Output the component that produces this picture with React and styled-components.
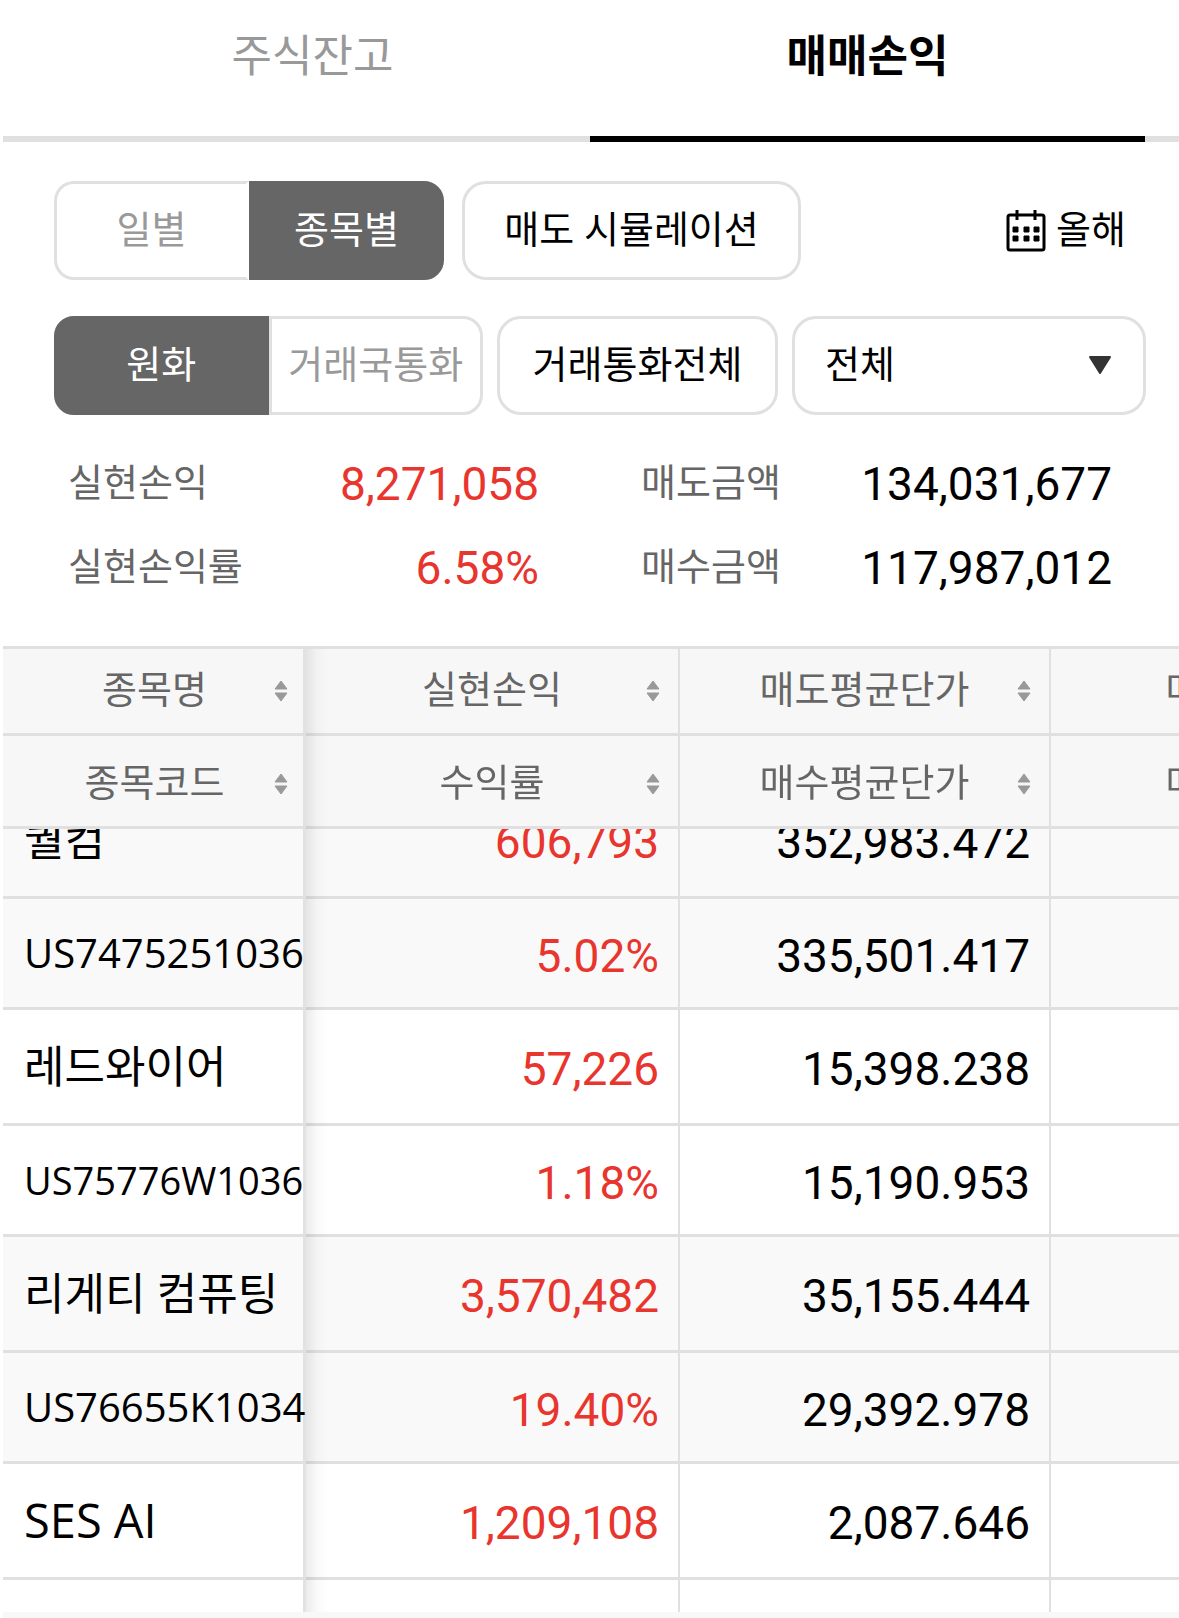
import React, { useLayoutEffect, useRef, useState } from 'react'
import styled, { createGlobalStyle } from 'styled-components'

const columns = [
    { top: "종목명", bottom: "종목코드" },
    { top: "실현손익", bottom: "수익률" },
    { top: "매도평균단가", bottom: "매수평균단가" },
    { top: "매도금액", bottom: "매수금액" },
];

const stocks = [
    { name: "퀄컴", code: "US7475251036", profit: "606,793", rate: "5.02%", sell: "352,983.472", buy: "335,501.417" },
    { name: "레드와이어", code: "US75776W1036", profit: "57,226", rate: "1.18%", sell: "15,398.238", buy: "15,190.953" },
    { name: "리게티 컴퓨팅", code: "US76655K1034", profit: "3,570,482", rate: "19.40%", sell: "35,155.444", buy: "29,392.978" },
    { name: "SES AI", latin: true, code: "", profit: "1,209,108", rate: "", sell: "2,087.646", buy: "" },
];

const CalendarIcon = () => (
    <svg width="40" height="42" viewBox="0 0 40 42" aria-hidden="true">
        <rect x="2" y="5" width="36" height="35" rx="2" fill="none" stroke="#000" strokeWidth="3" />
        <path d="M11 0v10M29 0v10" stroke="#000" strokeWidth="3" />
        <path d="M7 17h5v5h-5zM18 17h5v5h-5zM28 17h5v5h-5zM7 26h5v5h-5zM18 26h5v5h-5zM28 26h5v5h-5z" stroke="#000" strokeWidth="1" strokeLinejoin="round" />
    </svg>
);

const SortIcon = () => (
    <svg width="14" height="22" viewBox="0 0 14 22" aria-hidden="true">
        <path d="M7 1L13 9H1zM7 21L1 13H13z" fill="#999" stroke="#999" strokeLinejoin="round" />
    </svg>
);

const ArrowIcon = () => (
    <svg width="24" height="20" viewBox="0 0 24 20" aria-hidden="true">
        <path d="M2 1H22L12 17z" fill="#333" stroke="#333" strokeWidth="2" strokeLinejoin="round" />
    </svg>
);

const App = () => {

    const [tab, setTab] = useState("profit");
    const [group, setGroup] = useState("stock");
    const [currency, setCurrency] = useState("krw");
    const scroller = useRef(null);

    // the list opens a little way down, under the sticky header
    useLayoutEffect(() => {
        scroller.current.scrollTop = 46;
    }, []);

    return (
        <Screen>
            <GlobalStyle />
            <Tabs role="tablist">
                <Tab role="tab" aria-selected={tab === "balance"} $on={tab === "balance"} onClick={() => setTab("balance")}>주식잔고</Tab>
                <Tab role="tab" aria-selected={tab === "profit"} $on={tab === "profit"} onClick={() => setTab("profit")}>매매손익</Tab>
            </Tabs>

            <Filters>
                <FilterRow $gap="18px">
                    <Segment $w="390px">
                        <SegmentButton $on={group === "day"} onClick={() => setGroup("day")}>일별</SegmentButton>
                        <SegmentButton $on={group === "stock"} onClick={() => setGroup("stock")}>종목별</SegmentButton>
                    </Segment>
                    <Outline $w="339px">매도 시뮬레이션</Outline>
                    <Period><CalendarIcon /><PeriodText>올해</PeriodText></Period>
                </FilterRow>
                <FilterRow $gap="14px">
                    <Segment $w="429px">
                        <SegmentButton $on={currency === "krw"} onClick={() => setCurrency("krw")}>원화</SegmentButton>
                        <SegmentButton $on={currency === "local"} onClick={() => setCurrency("local")}>거래국통화</SegmentButton>
                    </Segment>
                    <Outline $w="281px">거래통화전체</Outline>
                    <SelectBox>
                        <Select aria-label="구분" defaultValue="all">
                            <option value="all">전체</option>
                        </Select>
                        <ArrowIcon />
                    </SelectBox>
                </FilterRow>
            </Filters>

            <Summary>
                <Pair><Label>실현손익</Label><Amount $red>8,271,058</Amount></Pair>
                <Pair><Label>매도금액</Label><Amount>134,031,677</Amount></Pair>
                <Pair><Label>실현손익률</Label><Amount $red>6.58%</Amount></Pair>
                <Pair><Label>매수금액</Label><Amount>117,987,012</Amount></Pair>
            </Summary>

            <Scroller ref={scroller}>
                <Table>
                    <colgroup>
                        <Col $w="303px" />
                        <Col $w="374px" />
                        <Col $w="371px" />
                        <Col $w="371px" />
                    </colgroup>
                    <Head>
                        {["top", "bottom"].map((line) => (
                            <tr key={line}>
                                {columns.map((col) => (
                                    <HeadCell key={col.top} scope="col">
                                        <SortButton $low={line === "bottom"}>
                                            <HeadText>{col[line]}</HeadText>
                                            <SortIcon />
                                        </SortButton>
                                    </HeadCell>
                                ))}
                            </tr>
                        ))}
                    </Head>
                    {stocks.map((stock) => (
                        <Group key={stock.name}>
                            <tr>
                                <Cell><Name $latin={stock.latin}>{stock.name}</Name></Cell>
                                <Cell><Value $red>{stock.profit}</Value></Cell>
                                <Cell><Value>{stock.sell}</Value></Cell>
                                <Cell />
                            </tr>
                            <tr>
                                <Cell><Code $wide={stock.code.includes("W")}>{stock.code}</Code></Cell>
                                <Cell><Value $red $low>{stock.rate}</Value></Cell>
                                <Cell><Value $low>{stock.buy}</Value></Cell>
                                <Cell />
                            </tr>
                        </Group>
                    ))}
                </Table>
            </Scroller>
            <Footer />
        </Screen>
    )
}

export default App

const GlobalStyle = createGlobalStyle`
* {
    box-sizing: border-box;
}
body {
    margin: 0;
    background-color: #fff;
    font-family: "Open Sans", "Noto Sans CJK KR", sans-serif;
    color: #000;
}
button, select {
    font-family: inherit;
    color: inherit;
    background: none;
    border: none;
    padding: 0;
    margin: 0;
    cursor: pointer;
}
`

const Screen = styled.div`
height: 100vh;
padding-left: 3px;
display: flex;
flex-direction: column;
`

const Tabs = styled.div`
display: flex;
flex-shrink: 0;
height: 142px;
padding: 0 34px 0 32px;
box-shadow: inset 0 -6px #e0e0e0;
`

const Tab = styled.button`
flex: 1;
padding-bottom: 26px;
font-size: 44px;
line-height: 60px;
font-weight: ${({ $on }) => ($on ? 700 : 400)};
color: ${({ $on }) => ($on ? "#000" : "#999")};
border-bottom: 6px solid ${({ $on }) => ($on ? "#000" : "transparent")};
`

const Filters = styled.div`
display: flex;
flex-direction: column;
flex-shrink: 0;
gap: 36px;
padding: 39px 33px 0 51px;
`

const FilterRow = styled.div`
display: flex;
height: 99px;
gap: ${({ $gap }) => $gap};
font-size: 38px;
`

const Segment = styled.div`
display: flex;
flex-shrink: 0;
width: ${({ $w }) => $w};
`

const SegmentButton = styled.button`
flex: 1 1 0;
min-width: 0;
width: 50%;
padding-bottom: 8px;
font-size: 38px;
white-space: nowrap;
color: ${({ $on }) => ($on ? "#fff" : "#999")};
background-color: ${({ $on }) => ($on ? "#666" : "#fff")};
border: 3px solid ${({ $on }) => ($on ? "#666" : "#e0e0e0")};
&:first-child {
    border-radius: 20px 0 0 20px;
    border-right-color: ${({ $on }) => ($on ? "#666" : "#fff")};
}
&:last-child {
    border-radius: 0 20px 20px 0;
}
`

const Outline = styled.button`
flex-shrink: 0;
width: ${({ $w }) => $w};
padding-bottom: 8px;
font-size: 38px;
border: 3px solid #e0e0e0;
border-radius: 24px;
`

const Period = styled.button`
display: flex;
align-items: center;
gap: 10px;
margin-left: auto;
padding-right: 20px;
font-size: 38px;
`

const PeriodText = styled.span`
padding-bottom: 8px;
`

const SelectBox = styled.div`
display: flex;
flex: 1;
align-items: center;
padding-right: 31px;
border: 3px solid #e0e0e0;
border-radius: 24px;
`

const Select = styled.select`
flex: 1;
height: 100%;
padding: 0 0 6px 30px;
font-size: 38px;
appearance: none;
outline: none;
`

const Summary = styled.div`
display: grid;
grid-template-columns: 1fr 1fr;
column-gap: 102px;
flex-shrink: 0;
padding: 27px 67px 36px 65px;
`

const Pair = styled.div`
display: flex;
align-items: center;
justify-content: space-between;
height: 84px;
`

const Label = styled.span`
padding-bottom: 6px;
font-size: 38px;
line-height: 56px;
color: #666;
`

const Amount = styled.span`
font-family: Roboto, sans-serif;
font-size: 46px;
line-height: 56px;
color: ${({ $red }) => ($red ? "#e8352e" : "#000")};
`

const Scroller = styled.div`
flex: 1;
min-height: 0;
overflow: auto;
scrollbar-width: none;
`

const Table = styled.table`
width: 1419px;
table-layout: fixed;
border-collapse: separate;
border-spacing: 0;
`

const Col = styled.col`
width: ${({ $w }) => $w};
`

const Head = styled.thead`
position: sticky;
top: 0;
z-index: 2;
`

// first column stays put and casts a shadow over the scrolling ones
const pinned = `
&:first-child {
    position: sticky;
    left: 0;
    z-index: 1;
    border-right: none;
    background-image: linear-gradient(to left, #e2e2e2 3px, transparent 3px);
}
&:first-child::after {
    content: "";
    position: absolute;
    top: 0;
    bottom: -3px;
    left: 100%;
    width: 22px;
    background: linear-gradient(to right, rgba(0, 0, 0, 0.08), rgba(0, 0, 0, 0.02) 50%, transparent);
}
`

const HeadCell = styled.th`
padding: 0;
font-weight: 400;
background-color: #f7f7f7;
border-bottom: 3px solid #e0e0e0;
border-right: 2px solid #e0e0e0;
tr:first-child > & {
    border-top: 3px solid #e0e0e0;
}
${pinned}
`

const SortButton = styled.button`
display: grid;
grid-template-columns: 32px 1fr 32px;
align-items: center;
width: 100%;
height: ${({ $low }) => ($low ? "90px" : "84px")};
padding-top: ${({ $low }) => ($low ? "6px" : "0")};
`

const HeadText = styled.span`
grid-column: 2;
padding-bottom: 6px;
font-size: 38px;
line-height: 56px;
white-space: nowrap;
color: #666;
`

const Group = styled.tbody`
background-color: #fff;
&:nth-of-type(odd) {
    background-color: #f9f9f9;
}
`

const Cell = styled.td`
padding: 0;
background-color: inherit;
border-bottom: 3px solid #e0e0e0;
border-right: 2px solid #e0e0e0;
tr:has(> &) {
    background-color: inherit;
}
${pinned}
`

const Name = styled.div`
height: 113px;
padding-left: 21px;
overflow: hidden;
white-space: nowrap;
font-size: ${({ $latin }) => ($latin ? "47px" : "44px")};
line-height: 112px;
`

// codes with a wide letter step down a size to fit the column
const Code = styled.div`
height: 108px;
padding-left: 21px;
overflow: hidden;
white-space: nowrap;
font-size: ${({ $wide }) => ($wide ? "38px" : "40px")};
line-height: 108px;
`

const Value = styled.div`
height: ${({ $low }) => ($low ? "108px" : "113px")};
padding-right: 19px;
text-align: right;
font-family: Roboto, sans-serif;
font-size: 46px;
line-height: ${({ $low }) => ($low ? "114px" : "119px")};
color: ${({ $red }) => ($red ? "#e8352e" : "#000")};
`

const Footer = styled.div`
flex-shrink: 0;
height: 6px;
background-color: #f8f8f8;
`
